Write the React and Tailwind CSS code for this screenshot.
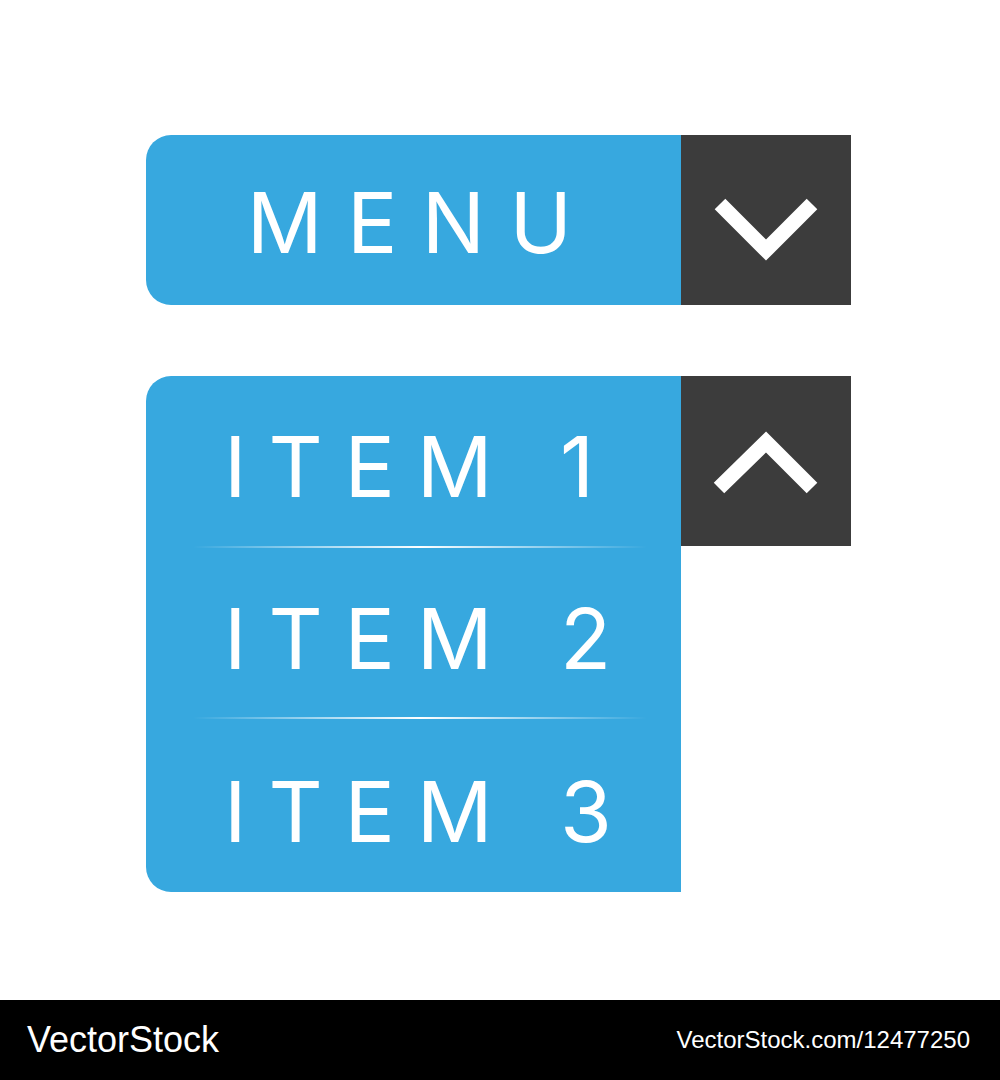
const BLUE = "bg-[#37a8df]";

const Chevron = ({ up }) => (
  <svg width="170" height="170" viewBox="0 0 170 170">
    <polyline
      points={up ? "38,112 85,66 131,112" : "39,69 85,115 131,69"}
      fill="none"
      stroke="#fff"
      strokeWidth="15"
      strokeLinecap="butt"
      strokeLinejoin="miter"
    />
  </svg>
);

const Divider = () => (
  <div className="h-[2px] ml-[47px] w-[454px] bg-gradient-to-r from-white/0 via-white to-white/0" />
);

const Item = ({ label, className }) => (
  <div className={`flex items-center pl-[78px] pt-[12px] ${className}`}>
    <span className="text-[84px] leading-none font-normal tracking-[0.26em] text-white">
      {label}
    </span>
  </div>
);

export default function App() {
  return (
    <div
      className="w-[1000px] h-[1080px] flex flex-col bg-white"
      style={{ fontFamily: "Inter, 'Noto Sans', sans-serif" }}
    >
      <div className="flex-1 pt-[135px] pl-[146px]">
        {/* closed menu */}
        <div className="flex h-[170px]">
          <div
            className={`w-[535px] ${BLUE} rounded-l-[25px] flex items-center justify-center pt-[5px] pl-[16px]`}
          >
            <span className="text-[84px] leading-none font-normal tracking-[0.29em] text-white">
              MENU
            </span>
          </div>
          <div className="w-[170px] bg-[#3c3c3c]">
            <Chevron />
          </div>
        </div>

        {/* open menu */}
        <div className="flex items-start mt-[71px]">
          <div className={`w-[535px] h-[516px] ${BLUE} rounded-l-[25px] flex flex-col`}>
            <Item label="ITEM 1" className="h-[170px]" />
            <Divider />
            <Item label="ITEM 2" className="h-[169px]" />
            <Divider />
            <Item label="ITEM 3" className="flex-1" />
          </div>
          <div className="w-[170px] h-[170px] bg-[#3c3c3c]">
            <Chevron up />
          </div>
        </div>
      </div>

      <footer
        className="h-[80px] bg-black flex items-center justify-between pl-[27px] pr-[30px] text-white"
        style={{ fontFamily: "'Liberation Sans', Arial, sans-serif" }}
      >
        <span className="text-[36px]">VectorStock</span>
        <span className="text-[24px]">VectorStock.com/12477250</span>
      </footer>
    </div>
  );
}
